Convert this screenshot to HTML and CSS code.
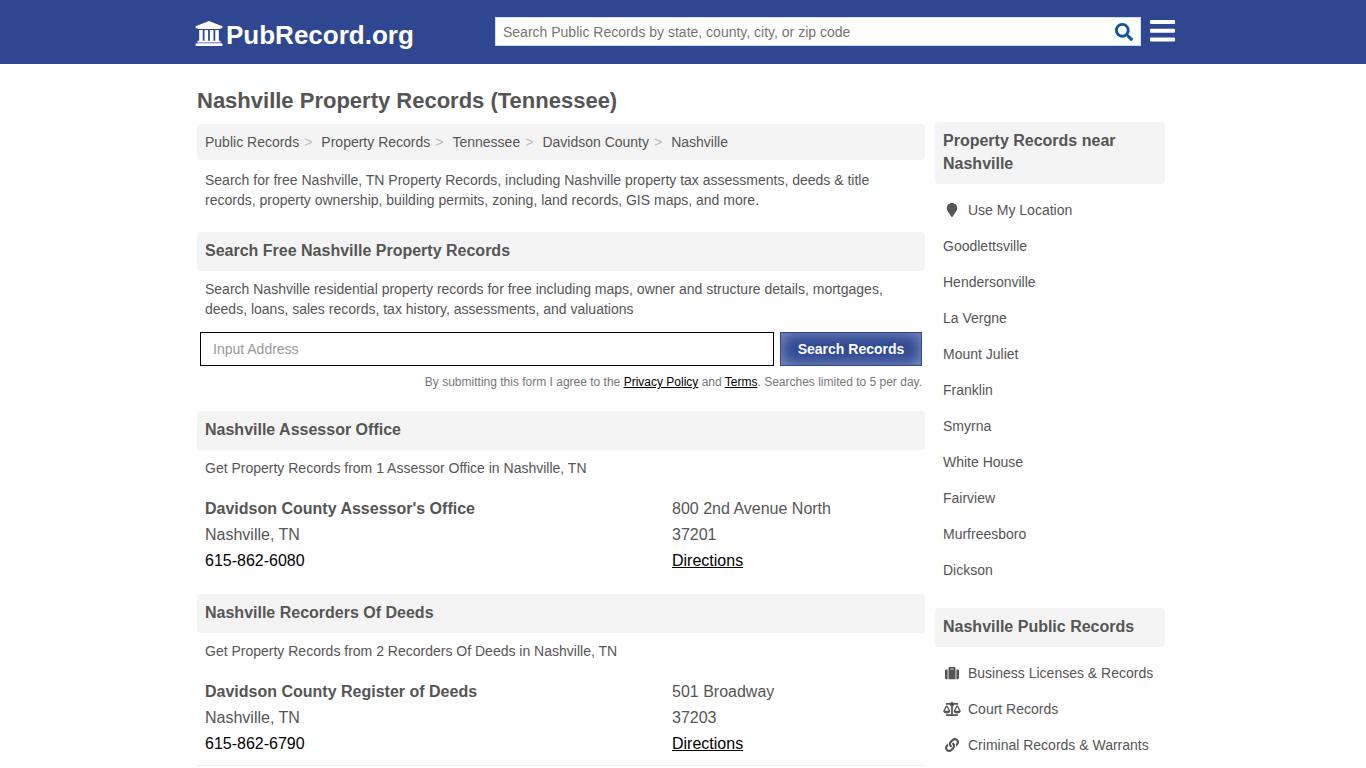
FILE: index.html
```html
<!DOCTYPE html>
<html lang="en">
<head>
<meta charset="utf-8">
<meta name="viewport" content="width=device-width, initial-scale=1">
<title>Nashville Property Records (Tennessee)</title>
<link rel="stylesheet" href="styles.css">
</head>
<body>
<header class="site-header">
  <div class="header-inner">
    <a class="logo" href="#">
      <svg class="logo-icon" viewBox="0 0 1920 1792" aria-hidden="true"><path d="M960 0l960 384v128h-128q0 26-20.500 45t-48.500 19H197q-28 0-48.500-19T128 512H0V384zM256 640h256v768h128V640h256v768h128V640h256v768h128V640h256v768h59q28 0 48.500 19t20.500 45v64H128v-64q0-26 20.500-45t48.500-19h59V640zm1595 960q28 0 48.500 19t20.500 45v128H0v-128q0-26 20.500-45t48.500-19h1782z"/></svg>
      <span>PubRecord.org</span>
    </a>
    <form class="site-search" role="search">
      <input class="site-search-input" type="text" aria-label="Search public records" placeholder="Search Public Records by state, county, city, or zip code">
      <button class="site-search-button" type="button" aria-label="Search">
        <svg class="search-icon" viewBox="0 0 512 512" aria-hidden="true"><path d="M505 442.7L405.3 343c-4.500-4.500-10.600-7-17-7H372c27.600-35.300 44-79.700 44-128C416 93.100 322.900 0 208 0S0 93.100 0 208s93.100 208 208 208c48.300 0 92.700-16.400 128-44v16.300c0 6.400 2.500 12.500 7 17l99.700 99.700c9.400 9.400 24.600 9.400 33.900 0l28.300-28.300c9.400-9.400 9.400-24.600.1-34zM208 336c-70.700 0-128-57.200-128-128 0-70.700 57.200-128 128-128 70.700 0 128 57.200 128 128 0 70.700-57.200 128-128 128z"/></svg>
      </button>
    </form>
    <button class="menu-button" type="button" aria-label="Menu">
      <svg class="menu-icon" viewBox="0 0 25 22" aria-hidden="true"><path d="M1 0h23q1 0 1 1v2q0 1-1 1H1q-1 0-1-1V1q0-1 1-1zM1 8.700h23q1 0 1 1v2q0 1-1 1H1q-1 0-1-1v-2q0-1 1-1zM1 17.400h23q1 0 1 1v2q0 1-1 1H1q-1 0-1-1v-2q0-1 1-1z"/></svg>
    </button>
  </div>
</header>
<div class="page">
  <main class="main">
    <h1 class="page-title">Nashville Property Records (Tennessee)</h1>
    <nav aria-label="Breadcrumb">
      <ol class="breadcrumb">
        <li><a href="#">Public Records</a></li>
        <li><a href="#">Property Records</a></li>
        <li><a href="#">Tennessee</a></li>
        <li><a href="#">Davidson County</a></li>
        <li><a href="#">Nashville</a></li>
      </ol>
    </nav>
    <p class="text intro">Search for free Nashville, TN Property Records, including Nashville property tax assessments, deeds &amp; title records, property ownership, building permits, zoning, land records, GIS maps, and more.</p>
    <section class="section search-section">
      <h2 class="heading">Search Free Nashville Property Records</h2>
      <p class="text">Search Nashville residential property records for free including maps, owner and structure details, mortgages, deeds, loans, sales records, tax history, assessments, and valuations</p>
      <form class="address-form">
        <input class="address-input" type="text" aria-label="Address" placeholder="Input Address">
        <button class="address-button" type="button">Search Records</button>
      </form>
      <p class="note">By submitting this form I agree to the <a href="#">Privacy Policy</a> and <a href="#">Terms</a>. Searches limited to 5 per day.</p>
    </section>
    <section class="section">
      <h2 class="heading">Nashville Assessor Office</h2>
      <p class="text">Get Property Records from 1 Assessor Office in Nashville, TN</p>
      <div class="record">
        <div>
          <h3 class="record-name">Davidson County Assessor's Office</h3>
          <div>Nashville, TN</div>
          <a class="phone" href="tel:6158626080">615-862-6080</a>
        </div>
        <div>
          <div>800 2nd Avenue North</div>
          <div>37201</div>
          <a class="directions" href="#">Directions</a>
        </div>
      </div>
    </section>
    <section class="section">
      <h2 class="heading">Nashville Recorders Of Deeds</h2>
      <p class="text">Get Property Records from 2 Recorders Of Deeds in Nashville, TN</p>
      <div class="record record-divided">
        <div>
          <h3 class="record-name">Davidson County Register of Deeds</h3>
          <div>Nashville, TN</div>
          <a class="phone" href="tel:6158626790">615-862-6790</a>
        </div>
        <div>
          <div>501 Broadway</div>
          <div>37203</div>
          <a class="directions" href="#">Directions</a>
        </div>
      </div>
    </section>
  </main>
  <aside class="sidebar">
    <section>
      <h2 class="heading">Property Records near Nashville</h2>
      <ul class="links">
        <li><a href="#"><svg class="link-icon" viewBox="0 0 384 512" aria-hidden="true"><path d="M172.268 501.670C26.970 291.031 0 269.413 0 192 0 85.961 85.961 0 192 0s192 85.961 192 192c0 77.413-26.970 99.031-172.268 309.670-9.535 13.774-29.930 13.773-39.464 0z"/></svg>Use My Location</a></li>
        <li><a href="#">Goodlettsville</a></li>
        <li><a href="#">Hendersonville</a></li>
        <li><a href="#">La Vergne</a></li>
        <li><a href="#">Mount Juliet</a></li>
        <li><a href="#">Franklin</a></li>
        <li><a href="#">Smyrna</a></li>
        <li><a href="#">White House</a></li>
        <li><a href="#">Fairview</a></li>
        <li><a href="#">Murfreesboro</a></li>
        <li><a href="#">Dickson</a></li>
      </ul>
    </section>
    <section>
      <h2 class="heading">Nashville Public Records</h2>
      <ul class="links">
        <li><a href="#"><svg class="link-icon" viewBox="0 0 512 512" aria-hidden="true"><path d="M128 480h256V80c0-26.500-21.500-48-48-48H176c-26.500 0-48 21.500-48 48v400zm64-384h128v32H192V96zm320 80v256c0 26.500-21.500 48-48 48h-48V128h48c26.500 0 48 21.500 48 48zM96 480H48c-26.500 0-48-21.500-48-48V176c0-26.500 21.500-48 48-48h48v352z"/></svg>Business Licenses &amp; Records</a></li>
        <li><a href="#"><svg class="link-icon" viewBox="0 0 640 512" aria-hidden="true"><path d="M256 336h-.02c0-16.180 1.340-8.730-85.050-181.510-17.650-35.290-68.190-35.360-85.870 0C-2.060 328.750.02 320.330.02 336H0c0 44.180 57.310 80 128 80s128-35.820 128-80zM128 176l72 144H56l72-144zm511.980 160c0-16.180 1.340-8.730-85.050-181.510-17.650-35.290-68.190-35.360-85.870 0-87.120 174.260-85.040 165.840-85.040 181.510H384c0 44.180 57.310 80 128 80s128-35.820 128-80h-.020zM440 320l72-144 72 144H440zm88 128H352V153.250c23.510-10.290 41.160-31.480 46.390-57.250H528c8.840 0 16-7.160 16-16V48c0-8.840-7.160-16-16-16H383.640C369.040 12.680 346.090 0 320 0s-49.040 12.680-63.640 32H112c-8.840 0-16 7.160-16 16v32c0 8.840 7.160 16 16 16h129.610c5.230 25.760 22.870 46.960 46.390 57.250V448H112c-8.840 0-16 7.160-16 16v32c0 8.840 7.160 16 16 16h416c8.840 0 16-7.160 16-16v-32c0-8.840-7.160-16-16-16z"/></svg>Court Records</a></li>
        <li><a href="#"><svg class="link-icon" viewBox="0 0 512 512" aria-hidden="true"><path d="M326.612 185.391c59.747 59.809 58.927 155.698.36 214.590-.11.12-.24.25-.36.37l-67.200 67.200c-59.270 59.270-155.699 59.262-214.960 0-59.270-59.260-59.270-155.700 0-214.960l37.106-37.106c9.840-9.840 26.786-3.300 27.294 10.606.648 17.722 3.826 35.527 9.690 52.721 1.986 5.822.567 12.262-3.783 16.612l-13.087 13.087c-28.026 28.026-28.905 73.660-1.155 101.960 28.024 28.579 74.086 28.749 102.325.51l67.200-67.190c28.191-28.191 28.073-73.757 0-101.830-3.701-3.694-7.429-6.564-10.341-8.569a16.037 16.037 0 0 1-6.947-12.606c-.396-10.567 3.348-21.456 11.698-29.806l21.054-21.055c5.521-5.521 14.182-6.199 20.584-1.731a152.482 152.482 0 0 1 20.522 17.197zM467.547 44.449c-59.261-59.262-155.690-59.270-214.960 0l-67.200 67.200c-.12.12-.25.25-.36.37-58.566 58.892-59.387 154.781.36 214.590a152.454 152.454 0 0 0 20.521 17.196c6.402 4.468 15.064 3.789 20.584-1.731l21.054-21.055c8.350-8.350 12.094-19.239 11.698-29.806a16.037 16.037 0 0 0-6.947-12.606c-2.912-2.005-6.640-4.875-10.341-8.569-28.073-28.073-28.191-73.639 0-101.830l67.200-67.190c28.239-28.239 74.300-28.069 102.325.51 27.750 28.300 26.872 73.934-1.155 101.960l-13.087 13.087c-4.350 4.350-5.769 10.790-3.783 16.612 5.864 17.194 9.042 34.999 9.690 52.721.509 13.906 17.454 20.446 27.294 10.606l37.106-37.106c59.271-59.259 59.271-155.699.001-214.959z"/></svg>Criminal Records &amp; Warrants</a></li>
      </ul>
    </section>
  </aside>
</div>
</body>
</html>
```

FILE: styles.css
```css
* {
  box-sizing: border-box;
}

body {
  margin: 0;
  background: #fff;
  color: #555;
  font: 14px/20px "Liberation Sans", Arial, sans-serif;
}

h1, h2, h3, p, ul, ol {
  margin: 0;
  padding: 0;
}

ul, ol {
  list-style: none;
}

a {
  color: inherit;
  text-decoration: none;
}

svg {
  display: block;
  fill: currentColor;
}

button, input {
  font: inherit;
  border-radius: 0;
}

.site-header {
  background: #2e4790;
  color: #fff;
}

.header-inner {
  display: flex;
  align-items: flex-start;
  max-width: 984px;
  min-height: 64px;
  margin: 0 auto;
  padding: 17px 0 11px 4px;
}

.logo {
  display: flex;
  align-items: center;
  gap: 3px;
  flex: 1 1 300px;
  font-size: 26px;
  line-height: 36px;
  font-weight: bold;
}

.logo-icon {
  width: 28px;
  height: 28px;
  padding-bottom: 3px;
}

.site-search {
  display: flex;
  flex: 0 1 646px;
  height: 29px;
  background: #fff;
  border: 1px solid #cfdcf5;
}

.site-search-input {
  flex: 1;
  min-width: 0;
  border: 0;
  padding: 0 7px;
  background: none;
}

.site-search-input::placeholder {
  color: #757575;
}

.site-search-button {
  display: flex;
  align-items: center;
  padding: 0 7px;
  border: 0;
  background: none;
  color: #0c53a0;
}

.search-icon {
  width: 18px;
  height: 18px;
}

.menu-button {
  margin-left: 9px;
  padding: 3px 0 0;
  border: 0;
  background: none;
  color: #fff;
}

.menu-icon {
  width: 25px;
  height: 22px;
}

.page {
  display: flex;
  gap: 10px;
  max-width: 980px;
  margin: 0 auto;
  padding: 0 8px 0 4px;
}

.main {
  flex: 1;
  min-width: 0;
  padding-top: 22px;
}

.page-title {
  margin-bottom: 8px;
  font-size: 22px;
  line-height: 30px;
}

.breadcrumb {
  display: flex;
  flex-wrap: wrap;
  padding: 8px;
  background: #f4f4f4;
  border-radius: 4px;
}

.breadcrumb li + li::before {
  content: ">";
  margin: 0 9px 0 5px;
  color: #bbb;
}

.text {
  padding: 8px 8px 0;
}

.intro {
  padding-top: 10px;
}

.section {
  margin-top: 12px;
}

.search-section {
  margin-top: 22px;
  margin-bottom: 19px;
}

.heading {
  padding: 7px 8px 9px;
  background: #f4f4f4;
  border-radius: 4px;
  font-size: 16px;
  line-height: 23px;
}

.address-form {
  display: flex;
  gap: 6px;
  padding: 13px 3px 0;
}

.address-input {
  flex: 1;
  min-width: 0;
  height: 34px;
  padding: 0 12px;
  border: 1px solid #000;
  background: #fff;
}

.address-input::placeholder {
  color: #999;
}

.address-button {
  flex: 0 0 142px;
  height: 34px;
  padding: 0;
  border: 1px solid #2e4790;
  background: #2e4790;
  box-shadow: inset 0 0 16px #8c9bc8;
  color: #fff;
  font-weight: bold;
}

.note {
  padding: 6px 3px 0;
  color: #777;
  font-size: 12px;
  text-align: right;
}

.note a {
  color: #000;
  text-decoration: underline;
}

.record {
  display: grid;
  grid-template-columns: 467fr 245fr;
  padding: 18px 8px 8px;
  font-size: 16px;
  line-height: 26px;
}

.record-divided {
  border-bottom: 1px solid #eee;
}

.record-name {
  font-size: 16px;
}

.phone, .directions {
  color: #000;
}

.directions {
  text-decoration: underline;
}

.sidebar {
  display: flex;
  flex-direction: column;
  gap: 20px;
  flex: 0 0 230px;
  padding-top: 58px;
}

.links {
  padding-top: 8px;
}

.links a {
  display: flex;
  align-items: center;
  padding: 8px;
}

.link-icon {
  width: 18px;
  height: 14px;
  margin-right: 7px;
}
```
